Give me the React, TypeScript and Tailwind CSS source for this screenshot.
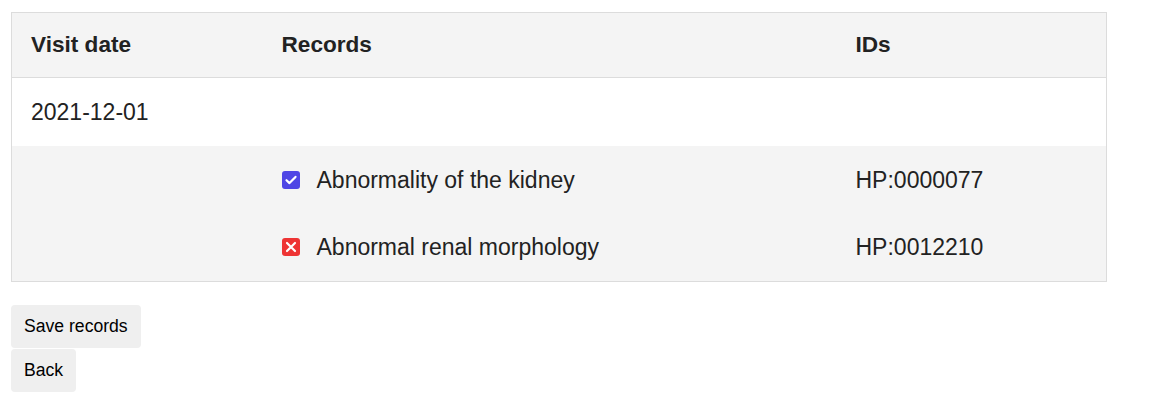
const rows = [
  { name: 'Abnormality of the kidney', id: 'HP:0000077', kept: true },
  { name: 'Abnormal renal morphology', id: 'HP:0012210', kept: false },
]

function CheckedBox() {
  return (
    <svg width="18" height="18" viewBox="0 0 18 18" className="shrink-0">
      <rect x="0" y="0" width="18" height="18" rx="3" fill="#4f46e5" />
      <path
        d="M4.5 9.2l3 2.9 6-6.2"
        fill="none"
        stroke="#fff"
        strokeWidth="2.2"
        strokeLinecap="round"
        strokeLinejoin="round"
      />
    </svg>
  )
}

function RejectedBox() {
  return (
    <svg width="18" height="18" viewBox="0 0 18 18" className="shrink-0">
      <rect x="0" y="0" width="18" height="18" rx="3" fill="#ee3434" />
      <path
        d="M5 5l8 8M13 5l-8 8"
        fill="none"
        stroke="#fff"
        strokeWidth="2.2"
        strokeLinecap="round"
      />
    </svg>
  )
}

export default function App() {
  return (
    <div className="min-h-screen bg-white pl-[11px] pt-3 font-['Liberation_Sans',Arial,sans-serif] text-[#222]">
      <table className="w-[1096px] border-collapse border border-[#dcdcdc] text-[23px] leading-[26px]">
        <thead>
          <tr className="h-[65px] border-b border-[#dcdcdc] bg-[#f4f4f4] pt-px text-left text-[22.6px]">
            <th className="w-[250px] pl-[19px] font-bold">Visit date</th>
            <th className="w-[574px] pl-5 font-bold">Records</th>
            <th className="pl-5 font-bold">IDs</th>
          </tr>
        </thead>
        <tbody>
          <tr className="h-[68px] bg-white">
            <td className="pl-[19px]">2021-12-01</td>
            <td />
            <td />
          </tr>
          {rows.map((row) => (
            <tr key={row.id} className="h-[68px] bg-[#f4f4f4]">
              <td />
              <td className="pl-5">
                <div className="flex items-center gap-[17px]">
                  {row.kept ? <CheckedBox /> : <RejectedBox />}
                  <span>{row.name}</span>
                </div>
              </td>
              <td className="pl-5">{row.id}</td>
            </tr>
          ))}
        </tbody>
      </table>

      <div className="mt-[23px] flex flex-col items-start gap-px text-[17.6px] text-black">
        <button className="h-[43px] rounded bg-[#efefef] px-[13px]">Save records</button>
        <button className="h-[43px] rounded bg-[#efefef] px-[13px]">Back</button>
      </div>
    </div>
  )
}
